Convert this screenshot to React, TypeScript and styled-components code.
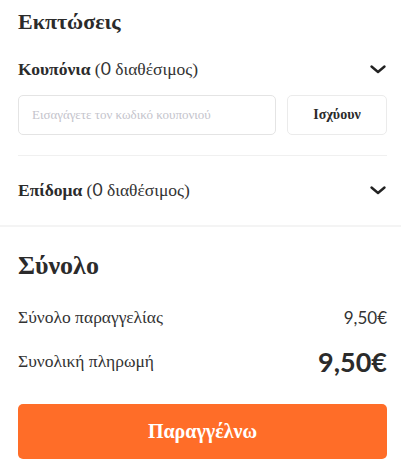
import React from "react";
import styled, { createGlobalStyle } from "styled-components";

const Global = createGlobalStyle`
  html, body { margin: 0; padding: 0; background: #fff; }
  body { font-family: "Liberation Serif", serif; color: #333; }
  * { box-sizing: border-box; }
`;

const Page = styled.div`
  width: 401px;
`;

const Section = styled.section`
  padding: 0 14px 0 18px;
`;

const Band = styled.div`
  height: 2px;
  background: #f4f4f4;
`;

const Heading = styled.h2<{ $size: number }>`
  margin: 0;
  font-family: "Liberation Serif", serif;
  font-size: ${(p) => p.$size}px;
  font-weight: 700;
  line-height: 1.2;
  color: #2b2b2b;
`;

const Num = styled.span`
  font-family: Lato, sans-serif;
`;

const Row = styled.div`
  display: flex;
  align-items: center;
  justify-content: space-between;
  height: 24px;
  font-size: 17.5px;
`;

const RowLabel = styled.div`
  color: #333;
  b { font-weight: 700; color: #2b2b2b; }
`;

const Chevron = styled.svg`
  width: 18px;
  height: 18px;
`;

const CouponForm = styled.div`
  display: flex;
  gap: 11px;
  margin-top: 14px;
`;

const Input = styled.input`
  flex: 1;
  height: 40px;
  border: 1px solid #e4e4e4;
  border-radius: 5px;
  padding: 0 13px;
  font-family: "Liberation Serif", serif;
  font-size: 13px;
  color: #333;
  outline: none;
  &::placeholder { color: #c4c4cc; }
`;

const ApplyButton = styled.button`
  width: 100px;
  height: 40px;
  border: 1px solid #ebebeb;
  border-radius: 5px;
  background: #fff;
  font-family: "Liberation Serif", serif;
  font-size: 14px;
  font-weight: 700;
  color: #2b2b2b;
`;

const Divider = styled.hr`
  border: 0;
  border-top: 1px solid #f0f0f0;
  margin: 20px 0 0;
`;

const SumRow = styled.div<{ $big?: boolean }>`
  display: flex;
  align-items: center;
  justify-content: space-between;
  font-size: 17.5px;
  height: ${(p) => (p.$big ? 40 : 24)}px;
`;

const Amount = styled.span<{ $big?: boolean }>`
  font-family: Lato, sans-serif;
  font-size: ${(p) => (p.$big ? 27 : 17)}px;
  font-weight: ${(p) => (p.$big ? 700 : 400)};
  color: ${(p) => (p.$big ? "#2b2b2b" : "#333")};
`;

const OrderButton = styled.button`
  width: 100%;
  height: 55px;
  border: 0;
  border-radius: 5px;
  background: #ff6d28;
  color: #fff;
  font-family: "Liberation Serif", serif;
  font-size: 20px;
  font-weight: 700;
`;

const Spacer = styled.div<{ $h: number }>`
  height: ${(p) => p.$h}px;
`;

const ChevronIcon = () => (
  <Chevron viewBox="0 0 18 18" fill="none">
    <path d="M2.5 6.5 L9 12 L15.5 6.5" stroke="#222" strokeWidth="2.4" strokeLinecap="round" strokeLinejoin="round" />
  </Chevron>
);

export default function App() {
  return (
    <Page>
      <Global />
      <Section>
        <Spacer $h={9} />
        <Heading $size={22}>Εκπτώσεις</Heading>
        <Spacer $h={22} />
        <Row>
          <RowLabel>
            <b>Κουπόνια</b> (<Num>0</Num> διαθέσιμος)
          </RowLabel>
          <ChevronIcon />
        </Row>
        <CouponForm>
          <Input placeholder="Εισαγάγετε τον κωδικό κουπονιού" />
          <ApplyButton>Ισχύουν</ApplyButton>
        </CouponForm>
        <Divider />
        <Spacer $h={22} />
        <Row>
          <RowLabel>
            <b>Επίδομα</b> (<Num>0</Num> διαθέσιμος)
          </RowLabel>
          <ChevronIcon />
        </Row>
        <Spacer $h={23} />
      </Section>
      <Band />
      <Section>
        <Spacer $h={23} />
        <Heading $size={26}>Σύνολο</Heading>
        <Spacer $h={24} />
        <SumRow>
          <span>Σύνολο παραγγελίας</span>
          <Amount>9,50€</Amount>
        </SumRow>
        <Spacer $h={12} />
        <SumRow $big>
          <span>Συνολική πληρωμή</span>
          <Amount $big>9,50€</Amount>
        </SumRow>
        <Spacer $h={22} />
        <OrderButton>Παραγγέλνω</OrderButton>
      </Section>
    </Page>
  );
}
